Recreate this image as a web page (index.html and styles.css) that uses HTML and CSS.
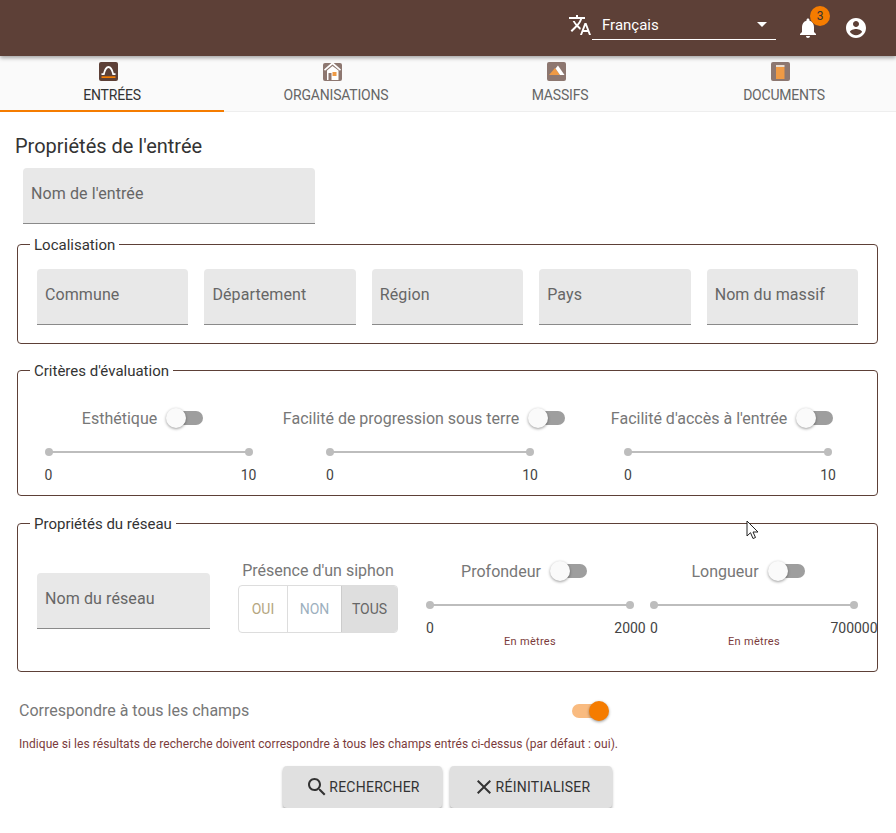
FILE: index.html
```html
<!DOCTYPE html>
<html lang="fr">
  <head>
    <meta charset="UTF-8" />
    <title>Recherche</title>
    <link rel="stylesheet" href="styles.css">
  </head>
  <body>
    <header class="topbar">
      <svg class="lang-icon" viewBox="0 0 24 24"><path d="M12.87 15.07l-2.54-2.51.03-.03c1.74-1.94 2.98-4.17 3.71-6.53H17V4h-7V2H8v2H1v1.99h11.17C11.5 7.92 10.44 9.75 9 11.35 8.07 10.32 7.3 9.19 6.69 8h-2c.73 1.63 1.73 3.17 2.98 4.56l-5.09 5.02L4 19l5-5 3.11 3.11.76-2.04zM18.5 10h-2L12 22h2l1.12-3h4.75L21 22h2l-4.5-12zm-2.62 7l1.62-4.33L19.12 17h-3.24z"/></svg>
      <div class="lang-select">
        <span>Français</span>
        <i class="caret"></i>
      </div>
      <div class="bell">
        <svg viewBox="0 0 24 24"><path d="M12 22c1.1 0 2-.9 2-2h-4c0 1.1.89 2 2 2zm6-6v-5c0-3.07-1.64-5.64-4.5-6.32V4c0-.83-.67-1.5-1.5-1.5s-1.5.67-1.5 1.5v.68C7.63 5.36 6 7.92 6 11v5l-2 2v1h16v-1l-2-2z"/></svg>
        <span class="badge">3</span>
      </div>
      <svg class="account" viewBox="0 0 24 24"><path d="M12 2C6.48 2 2 6.48 2 12s4.48 10 10 10 10-4.48 10-10S17.52 2 12 2zm0 3c1.66 0 3 1.34 3 3s-1.34 3-3 3-3-1.34-3-3 1.34-3 3-3zm0 14.2c-2.5 0-4.71-1.28-6-3.22.03-1.99 4-3.08 6-3.08 1.99 0 5.97 1.09 6 3.08-1.29 1.94-3.5 3.22-6 3.22z"/></svg>
    </header>

    <nav class="tabs">
      <div class="tab active">
        <svg class="tab-icon" viewBox="0 0 19 19">
          <rect width="19" height="19" rx="2" fill="#5d4037"/>
          <path d="M2.5 12.2h2.300C6 7 7 5 9.500 5s3.500 2 4.700 7.200h2.300" fill="none" stroke="#fff" stroke-width="1.800"/>
          <rect x="2.500" y="14.300" width="14" height="1.700" fill="#f57c00"/>
        </svg>
        <span>Entrées</span>
      </div>
      <div class="tab">
        <svg class="tab-icon" viewBox="0 0 19 19">
          <rect y="1" width="19" height="18" rx="2" fill="#8d7770"/>
          <path d="M1 7.500 9.500 0 18 7.500l-1 1.300-7.500-6.300L2 8.800z" fill="#fff"/>
          <path d="M4 8.500 9.500 4 15.500 8.500V18H4z" fill="#fff"/>
          <rect x="5.500" y="11" width="3" height="7" fill="#8d7770"/>
          <rect x="9.500" y="10" width="4" height="4" fill="#ef9a45"/>
        </svg>
        <span>Organisations</span>
      </div>
      <div class="tab">
        <svg class="tab-icon" viewBox="0 0 19 19">
          <rect width="19" height="19" rx="2" fill="#8d7770"/>
          <path d="M2 13 8 6l5 7z" fill="#ef9a45"/>
          <path d="M8.500 6.500 11 3.500 17.500 13H13z" fill="#fff"/>
        </svg>
        <span>Massifs</span>
      </div>
      <div class="tab">
        <svg class="tab-icon" viewBox="0 0 19 19">
          <rect width="19" height="19" rx="2" fill="#8d7770"/>
          <rect x="5" y="5" width="8.500" height="12" fill="#ef9a45"/>
          <rect x="5" y="3" width="8.500" height="2" fill="#e9dccf"/>
        </svg>
        <span>Documents</span>
      </div>
    </nav>

    <main class="content">
      <h1>Propriétés de l'entrée</h1>
      <div class="field field-name">Nom de l'entrée</div>

      <fieldset class="group group-loc">
        <legend>Localisation</legend>
        <div class="loc-row">
          <div class="field">Commune</div>
          <div class="field">Département</div>
          <div class="field">Région</div>
          <div class="field">Pays</div>
          <div class="field">Nom du massif</div>
        </div>
      </fieldset>

      <fieldset class="group group-crit">
        <legend>Critères d'évaluation</legend>
        <div class="crit-row">
          <div class="range">
            <div class="range-head">Esthétique <i class="switch"></i></div>
            <div class="slider"></div>
            <div class="marks"><span>0</span><span>10</span></div>
          </div>
          <div class="range">
            <div class="range-head">Facilité de progression sous terre <i class="switch"></i></div>
            <div class="slider"></div>
            <div class="marks"><span>0</span><span>10</span></div>
          </div>
          <div class="range">
            <div class="range-head">Facilité d'accès à l'entrée <i class="switch"></i></div>
            <div class="slider"></div>
            <div class="marks"><span>0</span><span>10</span></div>
          </div>
        </div>
      </fieldset>

      <fieldset class="group group-net">
        <legend>Propriétés du réseau</legend>
        <div class="net-row">
          <div class="field field-net">Nom du réseau</div>
          <div class="siphon">
            <div class="siphon-label">Présence d'un siphon</div>
            <div class="toggle-group">
              <span class="opt-oui">Oui</span>
              <span class="opt-non">Non</span>
              <span class="opt-tous">Tous</span>
            </div>
          </div>
          <div class="range range-net">
            <div class="range-head">Profondeur <i class="switch"></i></div>
            <div class="slider"></div>
            <div class="marks"><span>0</span><span>2000</span></div>
            <div class="unit">En mètres</div>
          </div>
          <div class="range range-net">
            <div class="range-head">Longueur <i class="switch"></i></div>
            <div class="slider"></div>
            <div class="marks"><span>0</span><span>700000</span></div>
            <div class="unit">En mètres</div>
          </div>
        </div>
      </fieldset>

      <div class="match-row">
        <span>Correspondre à tous les champs</span>
        <i class="switch on"></i>
      </div>
      <p class="helper">Indique si les résultats de recherche doivent correspondre à tous les champs entrés ci-dessus (par défaut : oui).</p>

      <div class="actions">
        <button class="btn">
          <svg viewBox="0 0 24 24"><path d="M15.500 14h-.79l-.28-.27C15.410 12.590 16 11.110 16 9.500 16 5.910 13.090 3 9.500 3S3 5.910 3 9.500 5.910 16 9.500 16c1.610 0 3.090-.59 4.230-1.570l.27.28v.79l5 4.990L20.490 19l-4.990-5zm-6 0C7.010 14 5 11.990 5 9.500S7.010 5 9.500 5 14 7.010 14 9.500 11.990 14 9.500 14z"/></svg>
          Rechercher
        </button>
        <button class="btn">
          <svg viewBox="0 0 24 24"><path d="M19 6.410L17.590 5 12 10.590 6.410 5 5 6.410 10.590 12 5 17.590 6.410 19 12 13.410 17.590 19 19 17.590 13.410 12z"/></svg>
          Réinitialiser
        </button>
      </div>
    </main>

    <svg class="cursor" viewBox="0 0 13 20"><path d="M1 1v15l3.500-3.300L7 18.500l2.500-1-2.500-5.500h5z" fill="#fff" stroke="#222" stroke-width="1"/></svg>
  </body>
</html>
```

FILE: styles.css
```css
* {
  box-sizing: border-box;
}
body {
  margin: 0;
  background: #fff;
  font-family: Roboto, "Liberation Sans", sans-serif;
  color: #555;
  overflow: hidden;
}
.topbar {
  height: 56px;
  background: #5d4037;
  display: flex;
  align-items: center;
  padding-right: 28px;
  color: #fff;
  position: relative;
  z-index: 2;
  box-shadow: 0 2px 4px rgba(0, 0, 0, 0.35);
}
.lang-icon {
  width: 24px;
  height: 24px;
  fill: #fff;
  margin-left: 568px;
  margin-top: -6px;
}
.lang-select {
  width: 184px;
  height: 28px;
  margin-top: -4px;
  border-bottom: 1px solid #fff;
  padding: 0 0 2px 10px;
  display: flex;
  align-items: center;
  justify-content: space-between;
  font-size: 15px;
}
.caret {
  width: 0;
  height: 0;
  border: 5px solid transparent;
  border-top-color: #fff;
  border-bottom-width: 0;
  margin-right: 9px;
}
.bell {
  width: 24px;
  height: 24px;
  margin-left: 20px;
  position: relative;
  fill: #fff;
}
.bell svg,
.account {
  width: 24px;
  height: 24px;
  fill: #fff;
  display: block;
}
.account {
  margin-left: 24px;
}
.badge {
  position: absolute;
  top: -10px;
  left: 14px;
  width: 20px;
  height: 20px;
  border-radius: 50%;
  background: #f57c00;
  color: #333;
  font-size: 12px;
  text-align: center;
  line-height: 20px;
}
.tabs {
  height: 56px;
  display: flex;
  background: #fafafa;
  border-bottom: 1px solid #eee;
}
.tab {
  flex: 1;
  display: flex;
  flex-direction: column;
  align-items: center;
  padding-top: 6px;
  font-size: 14px;
  letter-spacing: -0.2px;
  text-transform: uppercase;
  color: #666;
}
.tab.active {
  color: #333;
  border-bottom: 2px solid #f57c00;
  margin-bottom: -1px;
}
.tab-icon {
  width: 19px;
  height: 19px;
  margin: 0 7px 6px 0;
}
.content {
  padding: 22px 18px 0 17px;
}
h1 {
  margin: 0 0 10px -2px;
  font-size: 20px;
  font-weight: 400;
  line-height: 24px;
  color: #333;
}
.field {
  flex: 1;
  height: 56px;
  background: #e8e8e8;
  border-bottom: 1px solid #8a8a8a;
  border-radius: 4px 4px 0 0;
  padding: 16px 8px 0;
  font-size: 16px;
  line-height: 20px;
  letter-spacing: 0.1px;
  color: #666;
}
.field-name {
  width: 292px;
  margin-left: 6px;
}
.group {
  margin: 0;
  padding: 0;
  border: 1px solid #5d4037;
  border-radius: 4px;
  min-width: 0;
}
.group legend {
  margin-left: 12px;
  padding: 0 4px;
  font-size: 15px;
  line-height: 16px;
  color: #333;
  position: relative;
  top: 1px;
}
.group-loc {
  height: 108px;
  margin-top: 12px;
}
.loc-row {
  display: flex;
  gap: 16px;
  padding: 17px 19px 0;
}
.group-crit {
  height: 134px;
  margin-top: 18px;
}
.crit-row {
  display: grid;
  grid-template-columns: 221px 298px 254px;
  column-gap: 22px;
  padding: 29px 0 0 20px;
}
.range {
  display: flex;
  flex-direction: column;
  align-items: center;
}
.range-head {
  display: flex;
  align-items: center;
  height: 22px;
  font-size: 16px;
  color: #777;
  white-space: nowrap;
}
.switch {
  display: block;
  width: 34px;
  height: 14px;
  border-radius: 7px;
  background: #9e9e9e;
  margin: 0 12px 0 12px;
  position: relative;
}
.switch::after {
  content: "";
  position: absolute;
  left: -3px;
  top: -3px;
  width: 20px;
  height: 20px;
  border-radius: 50%;
  background: #fafafa;
  box-shadow: 0 1px 3px rgba(0, 0, 0, 0.4);
}
.switch.on {
  background: #f9bb80;
}
.switch.on::after {
  left: 17px;
  background: #f57c00;
}
.slider {
  width: 200px;
  height: 2px;
  margin-top: 22px;
  background: #bdbdbd;
  position: relative;
}
.slider::before,
.slider::after {
  content: "";
  position: absolute;
  top: -3px;
  width: 8px;
  height: 8px;
  border-radius: 50%;
  background: #bdbdbd;
}
.slider::before {
  left: -4px;
}
.slider::after {
  right: -4px;
}
.marks {
  width: 200px;
  display: flex;
  justify-content: space-between;
  margin-top: 14px;
  font-size: 14px;
  line-height: 16px;
  color: #444;
}
.marks span {
  width: 0;
  display: flex;
  justify-content: center;
}
.unit {
  margin-top: -1px;
  font-size: 11px;
  line-height: 13px;
  letter-spacing: 0.3px;
  color: #7b3b3b;
}
.net-row {
  display: flex;
  padding: 42px 0 0 19px;
}
.field-net {
  flex: none;
  width: 173px;
}
.siphon {
  width: 160px;
  margin-left: 28px;
  margin-top: -13px;
}
.siphon-label {
  font-size: 16px;
  line-height: 22px;
  text-align: center;
  color: #777;
  white-space: nowrap;
}
.toggle-group {
  display: flex;
  height: 48px;
  margin-top: 3px;
  border: 1px solid #ddd;
  border-radius: 4px;
  font-size: 14px;
  text-transform: uppercase;
  overflow: hidden;
}
.toggle-group span {
  display: flex;
  align-items: center;
  justify-content: center;
}
.opt-oui {
  width: 48px;
  color: #b5a67f;
}
.opt-non {
  width: 54px;
  color: #9db0be;
  border-left: 1px solid #ddd;
}
.opt-tous {
  flex: 1;
  color: #666;
  background: #dedede;
  border-left: 1px solid #ccc;
}
.range-net {
  width: 200px;
  margin-top: -13px;
}
.range-net:nth-child(3) {
  margin-left: 32px;
}
.range-net:nth-child(4) {
  margin-left: 24px;
}
.group-net {
  height: 157px;
  margin-top: 19px;
}
.match-row {
  display: flex;
  align-items: center;
  justify-content: space-between;
  width: 599px;
  margin: 29px 0 0 2px;
  font-size: 16px;
  line-height: 20px;
  color: #777;
}
.helper {
  margin: 16px 0 0 2px;
  font-size: 12px;
  line-height: 14px;
  letter-spacing: 0.06px;
  color: #7b3b3b;
}
.actions {
  display: grid;
  grid-template-columns: 159px 162px;
  gap: 8px;
  margin: 15px 0 0 266px;
}
.btn {
  height: 42px;
  display: flex;
  align-items: center;
  justify-content: center;
  padding: 0;
  border: 0;
  border-radius: 4px;
  background: #e0e0e0;
  box-shadow: 0 2px 3px rgba(0, 0, 0, 0.35);
  font-family: inherit;
  font-size: 14px;
  letter-spacing: 0.25px;
  text-transform: uppercase;
  color: #333;
}
.btn svg {
  width: 24px;
  height: 24px;
  fill: #333;
}
.cursor {
  position: absolute;
  left: 746px;
  top: 520px;
  width: 13px;
  height: 20px;
}
```
